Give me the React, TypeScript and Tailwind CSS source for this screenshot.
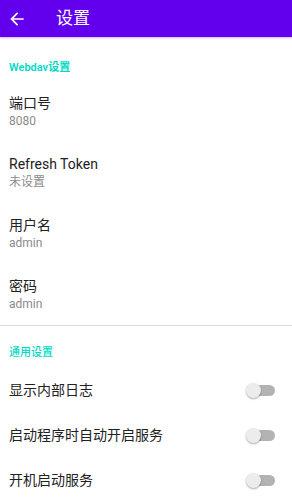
import React from "react";

const font = { fontFamily: '"Roboto", "Noto Sans CJK SC", sans-serif' };

function Toggle() {
  return (
    <div className="relative h-[15px] w-[29px] shrink-0">
      <div className="absolute right-0 top-[2px] h-[11px] w-[26px] rounded-full bg-[#b3b3b3]" />
      <div className="absolute left-0 top-0 h-[15px] w-[15px] rounded-full bg-[#ececec] shadow-[0_1px_2px_rgba(0,0,0,0.35)]" />
    </div>
  );
}

function Item({ title, sub }: { title: string; sub: string }) {
  return (
    <div className="pl-[9px] pt-[12px] pb-[13px]">
      <div className="text-[14px] leading-[20px] text-[#212121]">{title}</div>
      <div className="text-[12px] leading-[16px] text-[#8a8a8a]">{sub}</div>
    </div>
  );
}

function SwitchRow({ title }: { title: string }) {
  return (
    <div className="flex h-[45px] items-center justify-between pl-[9px] pr-[17px]">
      <span className="text-[14px] text-[#212121]">{title}</span>
      <Toggle />
    </div>
  );
}

export default function App() {
  return (
    <div className="h-[500px] w-[292px] overflow-hidden bg-white" style={font}>
      <div className="flex h-[37px] items-center bg-[#6200ee] shadow-[0_1px_2px_rgba(98,0,238,0.3)]">
        <svg viewBox="0 0 24 24" className="ml-[7px] h-[20px] w-[20px] shrink-0" fill="white">
          <path d="M20 11H7.83l5.59-5.59L12 4l-8 8 8 8 1.41-1.41L7.83 13H20v-2z" />
        </svg>
        <span className="ml-[29px] text-[17px] text-white">设置</span>
      </div>

      <div className="pl-[9px] pt-[23px] pb-[5px] text-[11px] leading-[16px] font-semibold text-[#03dac5]">
        Webdav设置
      </div>
      <Item title="端口号" sub="8080" />
      <Item title="Refresh Token" sub="未设置" />
      <Item title="用户名" sub="admin" />
      <Item title="密码" sub="admin" />
      <div className="h-px bg-[#dcdcdc]" />

      <div className="pl-[9px] pt-[19px] pb-[7px] text-[11px] leading-[16px] font-medium text-[#03dac5]">
        通用设置
      </div>
      <SwitchRow title="显示内部日志" />
      <SwitchRow title="启动程序时自动开启服务" />
      <SwitchRow title="开机启动服务" />
    </div>
  );
}
